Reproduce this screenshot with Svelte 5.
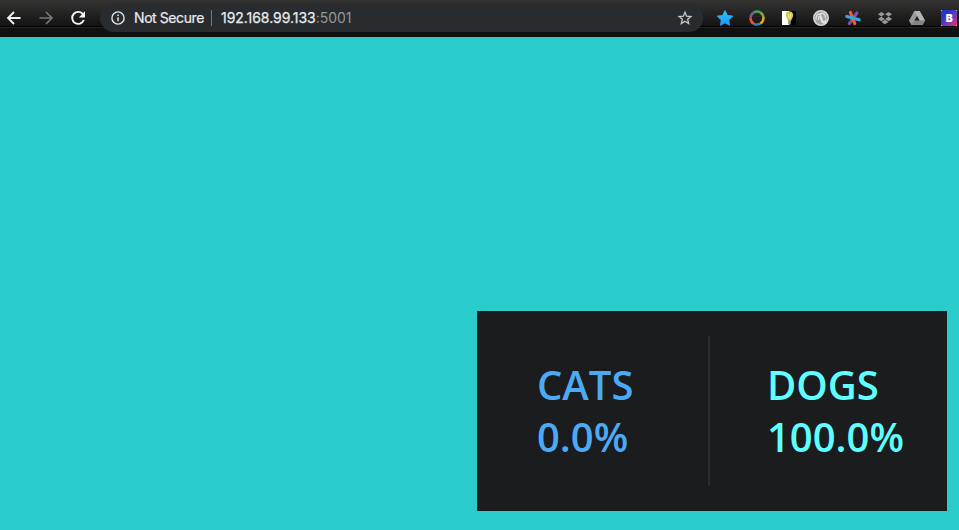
<script>
  const results = [
    { name: 'CATS', value: '0.0%', kind: 'cats' },
    { name: 'DOGS', value: '100.0%', kind: 'dogs' }
  ];
</script>

<div class="window">
  <header class="toolbar">
    <nav class="nav">
      <svg width="16" height="16" viewBox="0 0 16 16" fill="none" stroke="#f4f4f4" stroke-width="1.8"><path d="M14.5 8H2.5M8 2L2 8l6 6" /></svg>
      <svg width="16" height="16" viewBox="0 0 16 16" fill="none" stroke="#777" stroke-width="1.7"><path d="M1.5 8h12M8 2l6 6-6 6" /></svg>
      <svg width="16" height="16" viewBox="0 0 16 16"><path d="M13.1 4.4A6 6 0 1 0 13.8 10" fill="none" stroke="#f4f4f4" stroke-width="1.9" /><path d="M15 1.2v6.2H8.8z" fill="#f4f4f4" /></svg>
    </nav>

    <div class="address">
      <svg class="info" width="16" height="16" viewBox="0 0 16 16"><circle cx="8" cy="8" r="6.1" fill="none" stroke="#e3e5e8" stroke-width="1.4" /><path d="M7.3 7.2h1.5v4H7.3zM7.3 4.5h1.5V6H7.3z" fill="#e3e5e8" /></svg>
      <span class="secure">Not Secure</span>
      <span class="bar"></span>
      <span class="url"><span class="host">192.168.99.133</span><span class="port">:5001</span></span>
      <svg class="bookmark" width="16" height="16" viewBox="0 0 16 16" fill="none" stroke="#c7c9cc" stroke-width="1.3"><path d="M8 2.2l1.65 4 4.3.35-3.25 2.8 1 4.2L8 11.3l-3.7 2.25 1-4.2-3.25-2.8 4.3-.35z" /></svg>
    </div>

    <div class="extensions">
      <svg width="18" height="18" viewBox="0 0 18 18"><defs><linearGradient id="blue" x2="0" y2="1"><stop stop-color="#27c3fa" /><stop offset="1" stop-color="#2497f8" /></linearGradient></defs><path d="M9 2l2.2 4.5 5.1.7-3.7 3.6.9 5.2L9 13.7 4.5 16l.9-5.2-3.7-3.6 5.1-.7z" fill="url(#blue)" stroke="url(#blue)" stroke-width="1.2" stroke-linejoin="round" /></svg>
      <svg width="18" height="18" viewBox="0 0 18 18" fill="none" stroke-width="2.6">
        <path d="M5.8 3.4A6.5 6.5 0 0 1 12.2 3.4" stroke="#43a55b" />
        <path d="M12.2 3.4A6.5 6.5 0 0 1 15.4 8.2" stroke="#78ad45" />
        <path d="M15.4 8.2A6.5 6.5 0 0 1 12.2 14.6" stroke="#efa331" />
        <path d="M12.2 14.6A6.5 6.5 0 0 1 6 14.8" stroke="#2784c7" />
        <path d="M6 14.8A6.5 6.5 0 0 1 2.6 8.5" stroke="#e65035" />
        <path d="M2.6 8.5A6.5 6.5 0 0 1 5.8 3.4" stroke="#7c5998" />
        <path d="M6 7.5h6M6 10h6" stroke="#452025" stroke-width=".7" />
      </svg>
      <svg width="18" height="18" viewBox="0 0 18 18"><path d="M2 2h7v14H2z" fill="#fff" /><path d="M9 2h7v14H9z" fill="#050505" /><path d="M7 9C4.8 5.3 6.3 2.2 9.3 2.2s5 3 3.4 6.1L11 12H8z" fill="#cfc23c" /><path d="M8 4.5l1.2 5M11 4l-1 6" stroke="#f6efa0" /><path d="M8 11.7l3-.2-.3 3.4-1.4 1.1-1-1.1z" fill="#8c8c82" /></svg>
      <svg width="18" height="18" viewBox="0 0 18 18"><circle cx="9" cy="9" r="7.2" fill="#a0a0a0" stroke="#d5d5d5" stroke-width="1.6" /><path d="M4 10.8c0-7 4.3-7.5 5.5-2 1 5 3.5 5.5 4.8 1.2M6.5 11c0-5 1.7-4.2 2.3-1.2.8 4.8 4 5.5 5.6 3M8 5c3-2 6 .8 5.4 4" fill="none" stroke="#e5e5e5" stroke-width="1.2" /></svg>
      <svg width="18" height="18" viewBox="0 0 18 18" fill="none" stroke-width="3.1" stroke-linecap="round"><path d="M12.9 4L5.3 14.6" stroke="#8750a2" /><path d="M6.4 3.4L10.8 14.6" stroke="#f45e3c" /><path d="M2.8 7.4l12.4 3.4" stroke="#35a9df" /></svg>
      <svg width="18" height="18" viewBox="0 0 18 18" fill="#999"><path d="M5.4 3L9 5.3 5.4 7.6 1.9 5.3zM12.6 3l3.5 2.3-3.5 2.3L9 5.3zM5.4 7.6L9 9.9l-3.6 2.3-3.5-2.3zM12.6 7.6l3.5 2.3-3.5 2.3L9 9.9zM5.5 13L9 10.8l3.5 2.2L9 15.2z" /><path d="M9 5.3l3.6 2.3L9 9.9 5.4 7.6z" fill="#242424" /></svg>
      <svg width="18" height="18" viewBox="0 0 18 18"><path d="M6.4 2h5.2L17 11.5l-2.5 4.5h-11L1 11.5z" fill="#9b9b9b" /><path d="M6.4 2h5.2L17 11.5h-5.1z" fill="#b5b5b5" /><path d="M6.3 11.5H17L14.5 16h-11z" fill="#858585" /><path d="M9 7.1l2.6 4.4H6.4z" fill="#1c1c1c" /></svg>
      <svg width="18" height="18" viewBox="0 0 18 18"><defs><linearGradient id="bootstrap" x1="0.1" y1="0" x2="1" y2="1"><stop offset=".25" stop-color="#2a35c8" /><stop offset=".6" stop-color="#743cb4" /><stop offset="1" stop-color="#f03263" /></linearGradient></defs><path d="M1 1h16v16H1z" fill="url(#bootstrap)" /><path d="M1 1h1v1H1zM16 1h1v1h-1zM1 16h1v1H1zM16 16h1v1h-1z" fill="#bbb" /><text x="9.2" y="12.9" text-anchor="middle" font-family="Inter, sans-serif" font-size="10.5" font-weight="900" fill="#fff">B</text></svg>
    </div>
  </header>

  <main>
    <section class="results">
      {#each results as result}
        <div class="result {result.kind}">
          <div>{result.name}</div>
          <div>{result.value}</div>
        </div>
      {/each}
    </section>
  </main>
</div>

<style>
  .window {
    width: 959px;
    height: 530px;
    display: flex;
    flex-direction: column;
    overflow: hidden;
    background: #29cbcb;
  }
  svg { display: block; flex: none; }
  .toolbar {
    box-sizing: border-box;
    height: 37px;
    flex: none;
    display: flex;
    align-items: flex-start;
    padding-top: 4px;
    background: linear-gradient(#353433 0, #131313 26px, #020202 26px, #020202 27px, #242424 27px, #242424 28px, #111 28px);
  }
  .nav {
    display: flex;
    gap: 16px;
    width: 94px;
    padding: 6px 0 0 6px;
  }
  .address {
    box-sizing: border-box;
    width: 603px;
    height: 28px;
    display: flex;
    align-items: center;
    padding: 0 10px;
    border-radius: 14px;
    background: #292c2f;
    font: 14px/28px Inter, "Liberation Sans", sans-serif;
    color: #e8eaed;
    white-space: nowrap;
  }
  .secure { width: 77px; margin-left: 8px; letter-spacing: -0.42px; -webkit-text-stroke: 0.2px; }
  .bar { width: 1px; height: 16px; background: #73777b; }
  .url { margin-left: 9px; letter-spacing: -0.04px; }
  .host { -webkit-text-stroke: 0.25px; }
  .port { color: #93979b; }
  .bookmark { margin-left: auto; }
  .extensions {
    display: flex;
    gap: 14px;
    padding: 5px 0 0 13px;
  }
  main {
    flex: 1;
    display: flex;
    justify-content: flex-end;
    align-items: flex-end;
    padding: 0 12px 19px 0;
  }
  .results {
    box-sizing: border-box;
    width: 470px;
    height: 200px;
    display: flex;
    padding: 25px 0;
    background: #1a1c1d;
    font: 600 40px/52px "Open Sans", "Noto Sans", sans-serif;
  }
  .result {
    box-sizing: border-box;
    display: flex;
    flex-direction: column;
    justify-content: center;
  }
  .cats {
    width: 233px;
    padding-left: 60px;
    border-right: 2px solid #272c31;
    color: #4caaf5;
  }
  .dogs { padding-left: 57px; color: #5fffff; }
</style>
